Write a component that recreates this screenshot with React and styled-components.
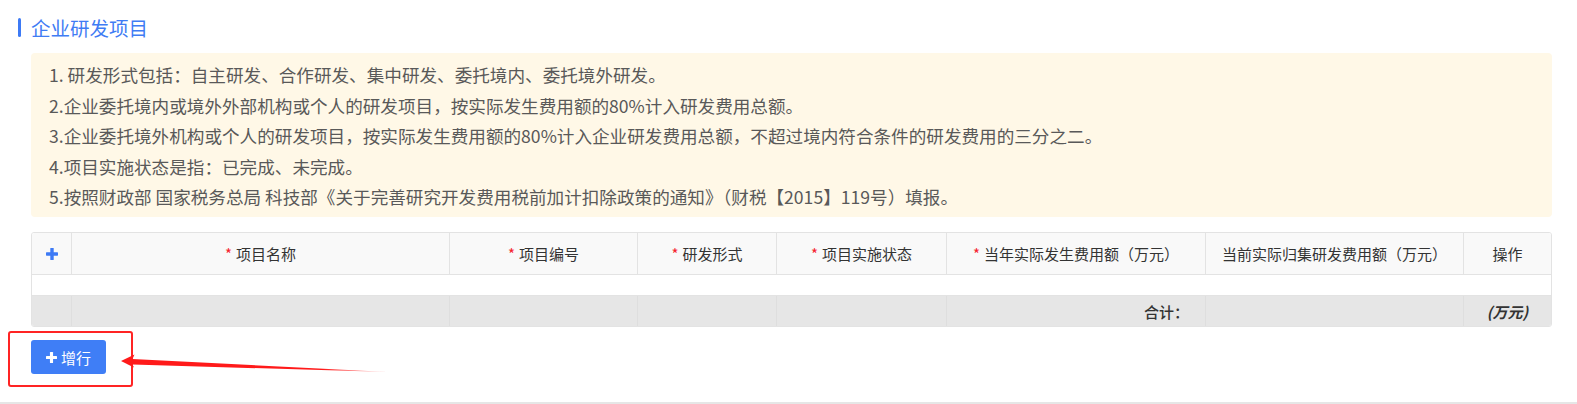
import React from "react";
import styled, { createGlobalStyle } from "styled-components";

const GlobalStyle = createGlobalStyle`
  html, body {
    margin: 0;
    padding: 0;
    background: #fff;
  }
  body {
    font-family: "Noto Sans CJK SC", "Noto Sans", sans-serif;
    color: #333;
  }
`;

const Page = styled.div`
  position: relative;
  box-sizing: border-box;
  width: 1577px;
  height: 404px;
  padding: 18px 0 0 18px;
  border-bottom: 2px solid #e6e6e6;
`;

const TitleRow = styled.div`
  display: flex;
  align-items: center;
  height: 19px;
`;

const TitleBar = styled.span`
  width: 3px;
  height: 19px;
  border-radius: 2px;
  background: #3d7af5;
`;

const TitleText = styled.h2`
  margin: 0 0 0 10px;
  font-size: 19.5px;
  font-weight: 400;
  line-height: 19px;
  color: #3f7cf4;
`;

const Content = styled.div`
  margin-left: 13px;
  width: 1521px;
`;

const Notice = styled.div`
  margin-top: 16px;
  box-sizing: border-box;
  height: 164px;
  padding: 7px 18px 5px;
  border-radius: 4px;
  background: #fff8e7;
  color: #595959;
  font-size: 17.6px;
  line-height: 30.5px;
`;

const NoticeLine = styled.div`
  white-space: nowrap;
`;

const Table = styled.table`
  margin-top: 15px;
  width: 1519px;
  table-layout: fixed;
  border-collapse: separate;
  border-spacing: 0;
  border: 1px solid #e3e3e3;
  border-radius: 3px;
  overflow: hidden;
  font-size: 15px;
`;

const HeadCell = styled.th`
  height: 41px;
  padding: 0;
  background: #f9f9f9;
  font-weight: 400;
  color: #333;
  text-align: center;
  border-bottom: 1px solid #e3e3e3;
  border-left: ${(p) => (p.$first ? "none" : "1px solid #e3e3e3")};
`;

const Star = styled.span`
  color: #f5222d;
  margin-right: 4px;
`;

const EmptyCell = styled.td`
  height: 20px;
  padding: 0;
  border-bottom: 1px solid #e3e3e3;
`;

const FootCell = styled.td`
  height: 30px;
  padding: 0 ${(p) => (p.$right ? "16px" : "0")} 0 0;
  background: #e6e6e6;
  color: #333;
  text-align: ${(p) => (p.$right ? "right" : "center")};
  font-style: ${(p) => (p.$italic ? "italic" : "normal")};
  font-weight: ${(p) => (p.$italic ? 700 : 500)};
  border-left: ${(p) => (p.$first ? "none" : "1px solid #dedede")};
`;

const Actions = styled.div`
  margin-top: 13px;
`;

const AddButton = styled.button`
  display: inline-flex;
  align-items: center;
  justify-content: center;
  gap: 4px;
  width: 75px;
  height: 34px;
  padding: 0;
  border: none;
  border-radius: 3px;
  background: #3f7ef6;
  color: #fff;
  font-family: inherit;
  font-size: 15px;
  cursor: pointer;
`;

const Annotation = styled.div`
  position: absolute;
  left: 8px;
  top: 331px;
  width: 121px;
  height: 52px;
  border: 2.5px solid #ff2424;
  border-radius: 3px;
  pointer-events: none;
`;

const ArrowLayer = styled.svg`
  position: absolute;
  left: 0;
  top: 0;
  pointer-events: none;
`;

function PlusIcon({ size = 12, color = "#fff" }) {
  return (
    <svg width={size} height={size} viewBox="0 0 12 12">
      <rect x="4.3" y="0" width="3.4" height="12" rx="0.6" fill={color} />
      <rect x="0" y="4.3" width="12" height="3.4" rx="0.6" fill={color} />
    </svg>
  );
}

const columns = [
  { w: 39 },
  { w: 378, label: "项目名称", req: true },
  { w: 188, label: "项目编号", req: true },
  { w: 139, label: "研发形式", req: true },
  { w: 170, label: "项目实施状态", req: true },
  { w: 259, label: "当年实际发生费用额（万元）", req: true },
  { w: 258, label: "当前实际归集研发费用额（万元）" },
  { w: 88, label: "操作" },
];

const notes = [
  "1. 研发形式包括：自主研发、合作研发、集中研发、委托境内、委托境外研发。",
  "2.企业委托境内或境外外部机构或个人的研发项目，按实际发生费用额的80%计入研发费用总额。",
  "3.企业委托境外机构或个人的研发项目，按实际发生费用额的80%计入企业研发费用总额，不超过境内符合条件的研发费用的三分之二。",
  "4.项目实施状态是指：已完成、未完成。",
  "5.按照财政部 国家税务总局 科技部《关于完善研究开发费用税前加计扣除政策的通知》（财税【2015】119号）填报。",
];

export default function App() {
  return (
    <>
      <GlobalStyle />
      <Page>
        <TitleRow>
          <TitleBar />
          <TitleText>企业研发项目</TitleText>
        </TitleRow>
        <Content>
          <Notice>
            {notes.map((n) => (
              <NoticeLine key={n}>{n}</NoticeLine>
            ))}
          </Notice>
          <Table>
            <colgroup>
              {columns.map((c, i) => (
                <col key={i} style={{ width: c.w }} />
              ))}
            </colgroup>
            <thead>
              <tr>
                {columns.map((c, i) => (
                  <HeadCell key={i} $first={i === 0}>
                    {i === 0 ? (
                      <PlusIcon size={12} color="#3d7af5" />
                    ) : (
                      <>
                        {c.req && <Star>*</Star>}
                        {c.label}
                      </>
                    )}
                  </HeadCell>
                ))}
              </tr>
            </thead>
            <tbody>
              <tr>
                <EmptyCell colSpan={columns.length} />
              </tr>
              <tr>
                <FootCell $first />
                <FootCell />
                <FootCell />
                <FootCell />
                <FootCell />
                <FootCell $right>合计：</FootCell>
                <FootCell />
                <FootCell $italic>(万元)</FootCell>
              </tr>
            </tbody>
          </Table>
          <Actions>
            <AddButton>
              <PlusIcon size={11} />
              增行
            </AddButton>
          </Actions>
        </Content>
        <Annotation />
        <ArrowLayer width="400" height="404" viewBox="0 0 400 404">
          <defs>
            <linearGradient id="fade" x1="121" y1="0" x2="390" y2="0" gradientUnits="userSpaceOnUse">
              <stop offset="0" stopColor="#ff1a1a" stopOpacity="1" />
              <stop offset="0.75" stopColor="#ff1a1a" stopOpacity="1" />
              <stop offset="1" stopColor="#ff1a1a" stopOpacity="0.15" />
            </linearGradient>
          </defs>
          <polygon
            points="121,361 134.5,354.5 132.5,359 388,372 132.5,364.5 134,367.5"
            fill="url(#fade)"
          />
        </ArrowLayer>
      </Page>
    </>
  );
}
